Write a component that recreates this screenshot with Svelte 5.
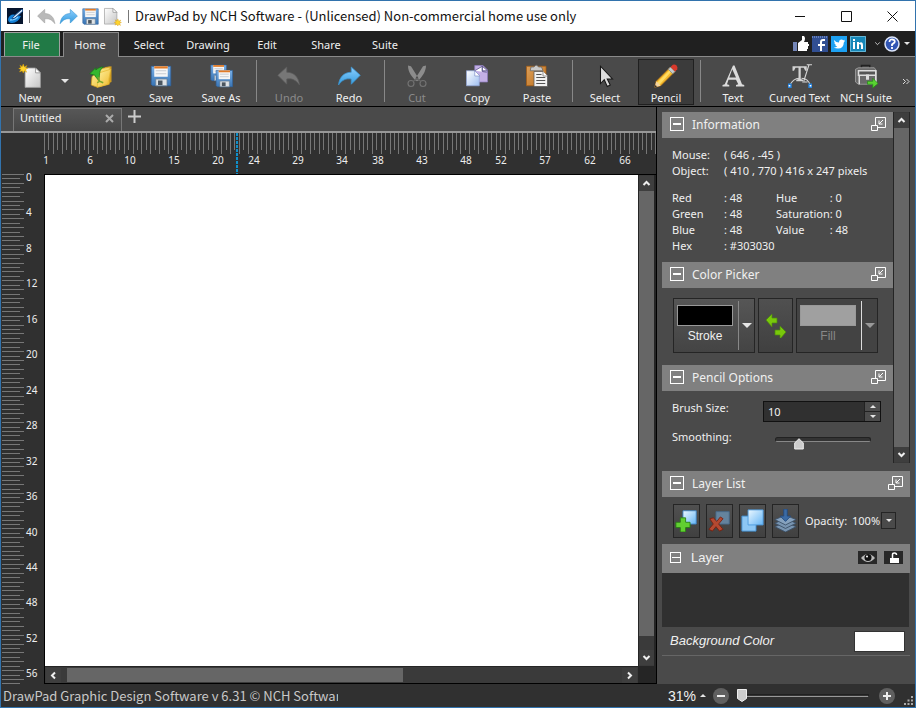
<script lang="ts">
	const tabs = ['File', 'Home', 'Select', 'Drawing', 'Edit', 'Share', 'Suite']
	let activeTab = $state('Home')

	type Tool = { name: string, icon: string, disabled?: boolean, menu?: boolean }

	const groups: Tool[][] = [
		[
			{ name: 'New', icon: 'new', menu: true },
			{ name: 'Open', icon: 'open' },
			{ name: 'Save', icon: 'save' },
			{ name: 'Save As', icon: 'saveas' },
		],
		[
			{ name: 'Undo', icon: 'undo', disabled: true },
			{ name: 'Redo', icon: 'redo' },
		],
		[
			{ name: 'Cut', icon: 'cut', disabled: true },
			{ name: 'Copy', icon: 'copy' },
			{ name: 'Paste', icon: 'paste' },
		],
		[
			{ name: 'Select', icon: 'select' },
			{ name: 'Pencil', icon: 'pencil' },
		],
		[
			{ name: 'Text', icon: 'text' },
			{ name: 'Curved Text', icon: 'curved' },
			{ name: 'NCH Suite', icon: 'suite' },
		],
	]
	let activeTool = $state('Pencil')

	// Rulers: one tick is half a unit of the label scale
	const tickStep = 4.43
	const ticks = Array.from({ length: 400 }, (_, i) => ({ at: Math.round(i * tickStep), long: i % 2 === 0 }))
	const topLabels = [[1, 0], [6, 10], [10, 19], [15, 29], [20, 39], [24, 47], [29, 57], [34, 67], [38, 75], [43, 85], [48, 95], [52, 103], [57, 113], [62, 123], [66, 131]]
	const leftLabels = Array.from({ length: 15 }, (_, i) => i * 4)
	const mouseTick = 193

	const colors = [
		['Red', '48', 'Hue', '0'],
		['Green', '48', 'Saturation', '0'],
		['Blue', '48', 'Value', '48'],
		['Hex', '#303030', '', ''],
	]

	let brushSize = $state('10')
	let smoothing = $state(20)
	let zoom = $state(0)
</script>

{#snippet page()}
	<path d="M5 4h13l6 6v18H5z" fill="url(#paper)" stroke="#999" />
	<path d="M18 4v6h6z" fill="#fff" stroke="#888" />
{/snippet}

{#snippet floppy()}
	<path d="M3 3h26v26H5l-2-2z" fill="url(#disk)" stroke="#2f639f" />
	<path d="M7 3h18v14H7z" fill="#f7f7f7" />
	<path d="M7 3h18v3H7z" fill="#e07b28" />
	<path d="M9 9h14M9 13h14" stroke="#c7cbd2" stroke-width="1.5" />
	<path d="M9 20h15v9H9z" fill="#dfe3e6" stroke="#6a7f93" />
	<path d="M12 22h6v6h-6z" fill="#4b5660" />
{/snippet}

{#snippet star(x, y)}
	<path transform="translate({x} {y})" d="M0-6L1.5-2 5-4 3-.8 6 0 3 1.4 4.5 5 1.2 3 0 6-1.4 3-5 4.5-3 1.2-6 0-3-1.2-4.5-4.5-1.5-2.5z" fill="#ffd42a" stroke="#d69a00" stroke-width=".6" />
{/snippet}

{#snippet icon(name)}
	<svg class="icon" viewBox="0 0 32 32" aria-hidden="true">
		{#if name === 'new'}
			<g transform="translate(4 1) scale(1.08)">{@render page()}</g>
			{@render star(7, 6)}
		{:else if name === 'newSmall'}
			<g transform="translate(-3 -2) scale(1.1)">{@render page()}</g>
			{@render star(25, 26)}
		{:else if name === 'open'}
			<path d="M12 8l8-1 2-3 8-1v21l-16 7z" fill="#cf9c20" />
			<path d="M4 17l3-3 4 1V7l17-3-1 23-16 4-8-3z" fill="url(#folder)" stroke="#d3a020" />
			<path d="M13 12l16-5-4 20-14 4z" fill="url(#folder)" stroke="#e7bb35" />
			<path d="M1 13L9 5v3c6-5 10-4 10-4-4 3-5 6-5 11l-1 7-5-6v-1z" fill="#35b72f" stroke="#187818" />
			<path d="M12 17l2 6 5 2M14 23l-3 2" fill="none" stroke="#76a82b" stroke-width="2" />
		{:else if name === 'save'}
			{@render floppy()}
		{:else if name === 'saveas'}
			<g transform="translate(0 -1) scale(.8)">{@render floppy()}</g>
			<g transform="translate(7 6) scale(.84)">{@render floppy()}</g>
		{:else if name === 'undo'}
			<path d="M13 4v7c10 0 16 7 17 17-5-7-10-9-17-8v7L1 15z" fill="#8b8b8b" stroke="#666" />
		{:else if name === 'redo'}
			<path d="M19 4v7C9 11 3 18 2 28c5-7 10-9 17-8v7l12-12z" fill="url(#arrow)" stroke="#3a94d1" />
		{:else if name === 'cut'}
			<path d="M4 2l4 1 10 16-3 4C9 17 4 11 4 2zM28 2l-4 1-10 16 3 4C23 17 28 10 28 2z" fill="#a8a8a8" />
			<circle cx="8" cy="26" r="4" fill="none" stroke="#858585" stroke-width="1.5" />
			<circle cx="24" cy="26" r="4" fill="none" stroke="#858585" stroke-width="1.5" />
			<path d="M11 23l6-4M21 23l-6-4" stroke="#707070" stroke-width="2" />
		{:else if name === 'copy'}
			<path d="M13 2h11l6 6v16H13z" fill="#c3afe5" stroke="#8d7cbb" />
			<path d="M2 9h10l7 6v14H2z" fill="url(#sheet)" stroke="#93a6d6" />
			<path d="M13 9l10-6v7l6 1M23 3l7 6h-7z" fill="#fff" stroke="#514b83" />
			<path d="M13 9v7h7z" fill="#fff" stroke="#8797cb" />
		{:else if name === 'paste'}
			<path d="M2 3h26v26H2z" fill="url(#board)" stroke="#a75c12" />
			<path d="M8 4h4q3-5 6 0h4l2 5H7z" fill="#cacaca" stroke="#666" />
			<path d="M12 10h12l6 6v14H12z" fill="#f1f1f1" stroke="#555" />
			<path d="M24 10v6h6" fill="#fff" stroke="#777" />
			<path d="M15 14h7M15 18h12M15 22h12M15 26h12" stroke="#555" stroke-width="1.5" />
		{:else if name === 'select'}
			<path d="M10 3v23l5-5 4 9 4-2-4-8h7z" fill="#ddd" stroke="#161616" stroke-width="1.4" />
		{:else if name === 'pencil'}
			<path d="M3 23L22 4l6 6L9 29l-8 2z" fill="#f4b82c" stroke="#a46819" />
			<path d="M4 25L23 6l2 2L7 28z" fill="#ffdc62" />
			<path d="M1 31l2-8 6 6z" fill="#f3d3a0" />
			<path d="M1 31l1-3 2 2z" fill="#222" />
			<path d="M19 7l6 6 3-3-6-6z" fill="#c5c9cc" stroke="#7c858a" />
			<path d="M22 4l3-3q3-1 5 1t1 5l-3 3z" fill="#d8392c" />
		{:else if name === 'text'}
			<path d="M2 30h9v-2l-3-1 2-6h10l3 6-3 1v2h11v-2l-3-1L18 2h-2L5 27l-3 1v2zM11 18l4-11 5 11z" fill="#dcdcdc" />
		{:else if name === 'curved'}
			<path d="M6 3h19v6h-2l-2-4h-4v15l3 1v2H11v-2l3-1V5h-4L8 9H6z" fill="#d3d3d3" />
			<path d="M28 1l-7 22M25 1h7M19 24h7M2 29Q7 19 15 19M18 19q9 0 12 10" fill="none" stroke="#d7d7d7" stroke-width="1.4" />
			<path d="M0 27h4v4H0zM28 27h4v4h-4z" fill="#fff" stroke="#2583df" stroke-width="1.8" />
		{:else if name === 'suite'}
			<path d="M10 6V2h11v4" fill="none" stroke="#222" stroke-width="2" />
			<path d="M2 7l4-2h21l3 4v18H6l-4-3z" fill="#6a6a6a" stroke="#aaa" />
			<path d="M6 9h23v6H6zM7 15v12M29 15v12" fill="#555" stroke="#ddd" stroke-width="2" />
			<path d="M16 14h4v7h-4z" fill="#ddd" />
			<path d="M18 23h7v-4l7 7-7 6v-5h-7z" fill="#59d332" stroke="#278818" />
		{/if}
	</svg>
{/snippet}

{#snippet caret(dir)}
	<svg class="caret {dir}" viewBox="0 0 9 9" aria-hidden="true"><path d="M1.5 6L4.5 3 7.5 6" /></svg>
{/snippet}

{#snippet header(title)}
	<header class="section-head">
		<button class="collapse" aria-label="Collapse {title}"></button>
		<h2>{title}</h2>
		<button class="dock" aria-label="Undock {title}">
			<svg viewBox="0 0 15 15"><path d="M4.5 8V.5h10v10H7M.5 8.5h6v5h-6zM12 3L8 7M8 3.5V7h3.5" /></svg>
		</button>
	</header>
{/snippet}

<div class="window">
	<svg class="defs" width="0" height="0" aria-hidden="true">
		<defs>
			<linearGradient id="paper" x2="1" y2="1"><stop stop-color="#fff" /><stop offset="1" stop-color="#c5c5c5" /></linearGradient>
			<linearGradient id="disk" x2="0" y2="1"><stop stop-color="#79afe6" /><stop offset="1" stop-color="#3975b5" /></linearGradient>
			<linearGradient id="folder" x2="1" y2="1"><stop stop-color="#fff2a0" /><stop offset="1" stop-color="#eeb92d" /></linearGradient>
			<linearGradient id="arrow" x2="0" y2="1"><stop stop-color="#8bceff" /><stop offset="1" stop-color="#349bdd" /></linearGradient>
			<linearGradient id="sheet" x2="1" y2="1"><stop stop-color="#fff" /><stop offset="1" stop-color="#9fbff0" /></linearGradient>
			<linearGradient id="board" x2="1" y2="1"><stop stop-color="#dda05a" /><stop offset="1" stop-color="#bb6e1c" /></linearGradient>
			<linearGradient id="blue" x2="1" y2="1"><stop stop-color="#ecf8ff" /><stop offset="1" stop-color="#65b5f5" /></linearGradient>
		</defs>
	</svg>

	<div class="titlebar">
		<svg class="logo" viewBox="0 0 16 16" aria-hidden="true">
			<path d="M0 0h16v16H0z" fill="#06152d" />
			<path d="M1 11q2-6 8-4l5 1q-3 7-9 7-4 0-4-4z" fill="#1482d8" />
			<path d="M3 12q5 0 8-3" fill="none" stroke="#77caff" stroke-width="1.5" />
			<path d="M15 1L6 9l-1 2 3-1 8-7z" fill="#dceeff" stroke="#164b8a" />
		</svg>
		<span class="bar"></span>
		<button class="quick dim" aria-label="Undo">{@render icon('undo')}</button>
		<button class="quick" aria-label="Redo">{@render icon('redo')}</button>
		<button class="quick" aria-label="Save">{@render icon('save')}</button>
		<button class="quick" aria-label="New">{@render icon('newSmall')}</button>
		<span class="bar second"></span>
		<h1>DrawPad by NCH Software - (Unlicensed) Non-commercial home use only</h1>
		<button class="control" aria-label="Minimize"><svg viewBox="0 0 11 11"><path d="M0 5.5h10" /></svg></button>
		<button class="control" aria-label="Maximize"><svg viewBox="0 0 11 11"><path d="M.5.5h10v10H.5z" /></svg></button>
		<button class="control" aria-label="Close"><svg viewBox="0 0 11 11"><path d="M.5.5l10 10M10.5.5l-10 10" /></svg></button>
	</div>

	<nav class="tabs">
		{#each tabs as tab}
			<button class:file={tab === 'File'} class:active={tab === activeTab} onclick={() => activeTab = tab}>{tab}</button>
		{/each}
		<div class="social">
			<button aria-label="Like"><svg viewBox="0 0 16 16"><path d="M0 6h4v9H0z" fill="#7486b8" /><path d="M5 7l4-3V0h2q2 2 0 6h4v2h1v2h-1v3h-1v2H5z" fill="#fff" /></svg></button>
			<button aria-label="Facebook"><svg viewBox="0 0 16 16"><path d="M0 0h16v16H0z" fill="#314f93" /><path d="M0 1h16" stroke="#9db1df" stroke-dasharray="1 1" /><path d="M13 4h-2q-2 0-2 2v9M6 9h7" fill="none" stroke="#fff" stroke-width="2" /></svg></button>
			<button aria-label="Twitter"><svg viewBox="0 0 16 16"><path d="M0 0h16v16H0z" fill="#1da1f2" /><path d="M3 4q2 2.500 5 2.500Q8 3.500 10.500 3.500q1 0 1.800.8L14 3.800l-1 1.500 1-.2-1.200 1.400Q12.700 12.500 7 12.500q-2.500 0-4.200-1 2 0 3.500-1Q4.500 10 4 8.800h1Q3.200 8 3.200 6.500l1 .2Q2.700 5.500 3 4z" fill="#fff" /></svg></button>
			<button aria-label="LinkedIn"><svg viewBox="0 0 16 16"><path d="M0 0h16v16H0z" fill="#1687b8" /><path d="M.5.5h15v15H.5z" fill="none" stroke="#65b5d5" /><path d="M3 6h2v7H3zM3 3h2v2H3zM7 6h2v1q4-2 4 2v4h-2V9q-2-2-2 0v4H7z" fill="#fff" /></svg></button>
			<button class="more" aria-label="More">{@render caret('down')}</button>
			<button aria-label="Help"><svg viewBox="0 0 16 16"><circle cx="8" cy="8" r="7" fill="#3156b4" stroke="#dce5fa" stroke-width="1.5" /><path d="M5.5 6q0-3 3-2.5 3 .5 2 3L8 8.500v1.500M8 11v2" fill="none" stroke="#fff" stroke-width="1.800" /></svg></button>
			<button class="help-menu" aria-label="Help menu"><i class="triangle"></i></button>
		</div>
	</nav>

	<div class="ribbon">
		{#each groups as group}
			<div class="group">
				{#each group as tool}
					<button
						class="tool {tool.icon}"
						class:active={tool.name === activeTool}
						disabled={tool.disabled}
						onclick={() => activeTool = tool.name}
					>
						{@render icon(tool.icon)}
						<span>{tool.name}</span>
					</button>
					{#if tool.menu}
						<button class="tool-menu" aria-label="{tool.name} menu"><i class="triangle"></i></button>
					{/if}
				{/each}
			</div>
		{/each}
		<button class="overflow" aria-label="More tools"><svg viewBox="0 0 8 7"><path d="M1 1l2.500 2.500L1 6M4.500 1L7 3.500 4.500 6" /></svg></button>
	</div>

	<main>
		<section class="document">
			<div class="doc-tabs">
				<div class="doc-tab">
					<span>Untitled</span>
					<button aria-label="Close tab"><svg viewBox="0 0 9 9"><path d="M1 1l7 7M8 1L1 8" /></svg></button>
				</div>
				<button class="add" aria-label="New tab"><svg viewBox="0 0 13 13"><path d="M6.500 0v13M0 6.500h13" /></svg></button>
			</div>
			<div class="workspace">
				<svg class="ruler top">
					{#each ticks as tick}
						<path d="M{tick.at + 43}.5 0v{tick.long ? 21 : 17}" />
					{/each}
					{#each topLabels as [label, n]}
						<text x={45 + Math.round(n * 4.42)} y="31">{label}</text>
					{/each}
					<path class="mouse" d="M{mouseTick + 43} 0v41" />
				</svg>
				<svg class="ruler left">
					<!-- the ruler reaches 4px above the view, so the first label fits -->
					<g transform="translate(0 4)">
						{#each ticks as tick}
							<path d="M1 {tick.at}.5h{tick.long ? 22 : 18}" />
						{/each}
						{#each leftLabels as label, i}
							<text class="start" x="25" y={7 + Math.round(i * 35.45)}>{label}</text>
						{/each}
					</g>
				</svg>
				<div class="view">
					<div class="canvas"></div>
					<div class="scroll vertical">
						<button aria-label="Scroll up">{@render caret('up')}</button>
						<div class="track"><div class="thumb" style="flex-grow: 97"></div><div style="flex-grow: 3"></div></div>
						<button aria-label="Scroll down">{@render caret('down')}</button>
					</div>
					<div class="scroll horizontal">
						<button aria-label="Scroll left">{@render caret('left')}</button>
						<div class="track"><div style="flex-grow: 1"></div><div class="thumb" style="flex-grow: 60"></div><div style="flex-grow: 39"></div></div>
						<button aria-label="Scroll right">{@render caret('right')}</button>
					</div>
				</div>
			</div>
		</section>

		<aside>
			<div class="upper">
				<div class="sections">
					{@render header('Information')}
					<div class="info">
						<dl>
							<dt>Mouse:</dt><dd>( 646 , -45 )</dd>
							<dt>Object:</dt><dd>( 410 , 770 ) 416 x 247 pixels</dd>
						</dl>
						<table>
							<tbody>
								{#each colors as [a, av, b, bv]}
									<tr><th>{a}</th><td>: {av}</td><th>{b}</th><td>{#if b}: {bv}{/if}</td></tr>
								{/each}
							</tbody>
						</table>
					</div>

					{@render header('Color Picker')}
					<div class="picker">
						<div class="swatch">
							<button class="pick"><i class="color black"></i>Stroke</button>
							<button class="drop" aria-label="Stroke menu"><i class="triangle"></i></button>
						</div>
						<button class="swap" aria-label="Swap colors">
							<svg viewBox="0 0 20 24"><path d="M0 6l6-6v4h5v5H6v4zM20 18l-6-6v4H9v5h5v4z" fill="#79c80b" stroke="#4c8b0b" stroke-width=".7" /></svg>
						</button>
						<div class="swatch off">
							<button class="pick"><i class="color"></i>Fill</button>
							<button class="drop" aria-label="Fill menu"><i class="triangle"></i></button>
						</div>
					</div>

					{@render header('Pencil Options')}
					<div class="options">
						<label for="brush">Brush Size:</label>
						<div class="spinner">
							<input id="brush" type="text" bind:value={brushSize} />
							<div class="spin">
								<button aria-label="Increase"><i class="triangle up"></i></button>
								<button aria-label="Decrease"><i class="triangle"></i></button>
							</div>
						</div>
						<label for="smoothing">Smoothing:</label>
						<div class="slider">
							<input id="smoothing" type="range" min="0" max="100" bind:value={smoothing} />
							<span class="knob" style="left: {smoothing}%"><svg viewBox="0 0 10 12"><path d="M5 .7l4.300 4.300v6H.7V5z" /></svg></span>
						</div>
					</div>
				</div>
				<div class="scroll vertical">
					<button aria-label="Scroll panels up">{@render caret('up')}</button>
					<div class="track"><div class="thumb" style="flex-grow: 1"></div></div>
					<button aria-label="Scroll panels down">{@render caret('down')}</button>
				</div>
			</div>

			{@render header('Layer List')}
			<div class="layer-tools">
				<button aria-label="Add layer"><svg viewBox="0 0 26 26"><path d="M9 2h15v15H9z" fill="url(#blue)" stroke="#3d84c5" /><path d="M6 10h6v5h5v6h-5v5H6v-5H1v-6h5z" fill="#61cf31" stroke="#287e14" /></svg></button>
				<button aria-label="Delete layer"><svg viewBox="0 0 26 26"><path d="M9 3h15v14H9z" fill="#65839d" stroke="#46698a" /><path d="M2 11l4-1 4 4 4-5 3 2-5 6 5 6-4 2-4-5-4 5-4-2 5-6z" fill="#b44931" stroke="#79200f" /></svg></button>
				<button aria-label="Duplicate layer"><svg viewBox="0 0 26 26"><path d="M1 8h16v17H1z" fill="#8dc7f4" stroke="#3f8ed0" /><path d="M8 1h17v17H8z" fill="url(#blue)" stroke="#4b99dd" /></svg></button>
				<button aria-label="Merge layers"><svg viewBox="0 0 26 26"><path d="M1 20l12-5 12 5-12 6z" fill="#7894b0" stroke="#3c5067" /><path d="M1 16l12-5 12 5-12 6z" fill="#7894b0" stroke="#3c5067" /><path d="M1 12l12-5 12 5-12 6z" fill="#86a2be" stroke="#3c5067" /><path d="M11 0h4v8h4l-6 6-6-6h4z" fill="#3b6ba5" stroke="#244a7b" /></svg></button>
				<label for="opacity">Opacity:</label>
				<div class="opacity">
					<select id="opacity"><option>100%</option><option>50%</option></select>
					<span><i class="triangle"></i></span>
				</div>
			</div>

			<div class="layer">
				<button class="collapse small" aria-label="Collapse layer"></button>
				<h3>Layer</h3>
				<button class="state" aria-label="Visibility"><svg viewBox="0 0 18 12"><path d="M2 6q7-8 14 0-7 8-14 0z" fill="#bbb" /><circle cx="9" cy="5.500" r="3.500" fill="#111" /><circle cx="8" cy="4.500" r="1" fill="#fff" /></svg></button>
				<button class="state" aria-label="Lock"><svg viewBox="0 0 18 12"><path d="M5 6h9v5H5z" fill="#fff" /><path d="M7.500 7V2.500q0-1.500 2-1.500 2 0 2 2" fill="none" stroke="#fff" stroke-width="1.500" /></svg></button>
			</div>
			<div class="layer-body"></div>
			<div class="background">
				<span>Background Color</span>
				<button aria-label="Background Color"></button>
			</div>
		</aside>
	</main>

	<footer>
		<p>DrawPad Graphic Design Software v 6.31 © NCH Software</p>
		<button class="percent">31% <i class="triangle up"></i></button>
		<button class="round" aria-label="Zoom out"><svg viewBox="0 0 16 16"><circle cx="8" cy="8" r="8" /><path d="M4 8h8" /></svg></button>
		<div class="slider zoom">
			<input type="range" aria-label="Zoom" min="0" max="100" bind:value={zoom} />
			<span class="knob" style="left: {zoom}%"><svg viewBox="0 0 10 13"><path d="M.5.5h9v9L5 12.500.5 9.500z" /></svg></span>
		</div>
		<button class="round" aria-label="Zoom in"><svg viewBox="0 0 16 16"><circle cx="8" cy="8" r="8" /><path d="M4 8h8M8 4v8" /></svg></button>
		<svg class="grip" viewBox="0 0 9 9" aria-hidden="true"><path d="M7 0h2v2H7zM7 3.500h2v2H7zM3.500 3.500h2v2h-2zM7 7h2v2H7zM3.500 7h2v2h-2zM0 7h2v2H0z" /></svg>
	</footer>
</div>

<style>
	:global(body) {
		margin: 0;
	}
	.window {
		--ui: "Noto Sans", "Open Sans", sans-serif;
		--system: "Noto Sans CJK SC", "Noto Sans", sans-serif;
		--edge: #252525;

		box-sizing: border-box;
		min-height: 100vh;
		display: flex;
		flex-direction: column;
		overflow: hidden;
		border: 1px solid #3273ad;
		background: #4a4a4a;
		color: #f0f0f0;
		font: 11px/16px var(--ui);
	}
	.window * {
		box-sizing: border-box;
	}
	.defs {
		position: absolute;
	}
	button {
		display: flex;
		align-items: center;
		justify-content: center;
		margin: 0;
		padding: 0;
		border: 0;
		background: none;
		color: inherit;
		font: inherit;
	}
	h1, h2, h3, p, dl, dd {
		margin: 0;
		font-weight: normal;
	}
	svg {
		display: block;
	}
	.triangle {
		border: 4px solid transparent;
		border-top-color: #e5e5e5;
		border-bottom: 0;
	}
	.triangle.up {
		border: 3px solid transparent;
		border-bottom-color: #e5e5e5;
		border-top: 0;
	}
	.caret {
		width: 9px;
		height: 9px;
		fill: none;
		stroke: #eee;
		stroke-width: 2;
	}
	.caret.down { transform: rotate(180deg); }
	.caret.left { transform: rotate(-90deg); }
	.caret.right { transform: rotate(90deg); }

	/* Title bar */
	.titlebar {
		display: flex;
		align-items: center;
		height: 30px;
		padding-left: 6px;
		background: #fff;
		color: #111;
	}
	.logo {
		width: 16px;
		height: 16px;
	}
	.bar {
		width: 1px;
		height: 13px;
		margin: 0 5px 0 6px;
		background: #777;
	}
	.bar.second {
		margin: 0 6px 0 5px;
	}
	.quick {
		width: 22px;
		height: 20px;
	}
	.quick .icon {
		width: 19px;
		height: 19px;
	}
	.quick.dim {
		opacity: .6;
	}
	h1 {
		flex: 1;
		font: 13px/20px var(--system);
		white-space: nowrap;
	}
	.control {
		width: 46px;
		height: 30px;
	}
	.control svg {
		width: 11px;
		height: 11px;
		fill: none;
		stroke: #111;
	}

	/* Tabs */
	.tabs {
		display: flex;
		align-items: flex-end;
		gap: 3px;
		height: 26px;
		padding-left: 3px;
		border-bottom: 1px solid #8a8a8a;
		background: #202020;
	}
	.tabs > button {
		width: 56px;
		height: 24px;
		padding: 2px 2px 0 0;
	}
	.tabs > .file {
		padding-top: 0;
		border: 1px solid #a0a0a0;
		border-bottom: 0;
		background: #217a46;
	}
	.tabs > .active {
		height: 25px;
		margin-bottom: -1px;
		padding-top: 0;
		border: 1px solid #8a8a8a;
		border-bottom: 0;
		background: #4a4a4a;
	}
	.social {
		display: flex;
		align-items: center;
		gap: 3px;
		height: 25px;
		margin-left: auto;
		padding-right: 5px;
	}
	.social button {
		width: 16px;
		height: 16px;
	}
	.social svg {
		width: 16px;
		height: 16px;
	}
	.social .more {
		width: 12px;
	}
	.social .caret {
		width: 7px;
		height: 7px;
		margin-left: 4px;
		stroke-width: 1;
	}
	.social .help-menu {
		width: 7px;
	}
	.help-menu .triangle {
		border-width: 3px 3px 0;
	}

	/* Ribbon */
	.ribbon {
		display: flex;
		height: 50px;
		border-bottom: 1px solid #000;
		background: #4a4a4a;
	}
	.group {
		display: flex;
		align-items: flex-end;
		padding-bottom: 1px;
	}
	.group + .group::before {
		content: '';
		align-self: center;
		width: 1px;
		height: 42px;
		margin: 0 2px 0 5px;
		background: #888;
	}
	.tool {
		flex-direction: column;
		justify-content: flex-end;
		gap: 3px;
		width: 60px;
		height: 46px;
		line-height: 14px;
		white-space: nowrap;
	}
	.tool.new {
		width: 58px;
	}
	.tool.curved {
		width: 73px;
	}
	.tool .icon {
		width: 24px;
		height: 24px;
	}
	.tool:disabled {
		color: #8a8a8a;
	}
	.tool:disabled .icon {
		opacity: .7;
	}
	.tool.active {
		width: 56px;
		margin: 0 1px 0 3px;
		background: #3b3b3b;
		box-shadow: inset 0 0 0 1px #202020;
	}
	.tool-menu {
		align-self: center;
		width: 12px;
	}
	.overflow {
		margin-left: auto;
		width: 18px;
	}
	.overflow svg {
		width: 8px;
		height: 7px;
		fill: none;
		stroke: #ddd;
	}

	/* Document */
	main {
		display: flex;
		flex: 1;
	}
	.document {
		flex: 1;
		display: flex;
		flex-direction: column;
		min-width: 0;
		border-right: 1px solid #000;
	}
	.doc-tabs {
		display: flex;
		align-items: flex-end;
		height: 26px;
		padding-left: 12px;
		border-bottom: 2px solid #989898;
	}
	.doc-tab {
		display: flex;
		align-items: center;
		justify-content: space-between;
		width: 109px;
		height: 23px;
		padding: 0 7px 4px 6px;
		border: 1px solid #777;
		border-bottom: 0;
		background: linear-gradient(#575757, #474747);
	}
	.doc-tab svg {
		width: 9px;
		height: 9px;
		stroke: #aaa;
		stroke-width: 2;
	}
	.add {
		width: 25px;
		height: 24px;
		padding-bottom: 5px;
	}
	.add svg {
		width: 13px;
		height: 13px;
		stroke: #ccc;
		stroke-width: 2;
	}
	.workspace {
		flex: 1;
		display: grid;
		grid-template: 41px 1fr / 43px 1fr;
		background: #303030;
	}
	.ruler {
		width: 100%;
		height: 100%;
		overflow: hidden;
		stroke: #777;
		shape-rendering: crispEdges;
	}
	.ruler.top {
		grid-column: 1 / 3;
	}
	.ruler.left {
		/* the view decides the height */
		height: 0;
		min-height: calc(100% + 4px);
		margin-top: -4px;
	}
	.ruler text {
		fill: #eee;
		stroke: none;
		font-size: 10px;
		text-anchor: middle;
	}
	.ruler .start {
		text-anchor: start;
	}
	.ruler .mouse {
		stroke: #0f8fc9;
		stroke-width: 2;
		stroke-dasharray: 3 1;
	}
	.view {
		display: grid;
		grid-template: 1fr 17px / 1fr 18px;
		border: 1px solid #000;
		border-right: 0;
		background: var(--edge);
	}
	.canvas {
		background: #fff;
	}
	.scroll {
		display: flex;
		padding: 1px;
		background: #3a3a3a;
	}
	.scroll.vertical {
		flex: none;
		flex-direction: column;
		width: 17px;
		padding: 1px 0;
		border: 1px solid var(--edge);
		border-width: 0 1px;
	}
	.scroll.horizontal {
		border-top: 1px solid var(--edge);
	}
	.scroll button {
		flex: none;
		width: 15px;
		height: 15px;
		background: #3e3e3e;
	}
	.track {
		flex: 1;
		display: flex;
	}
	.vertical .track {
		flex-direction: column;
	}
	.thumb {
		background: #666;
	}

	/* Side panels */
	aside {
		flex: none;
		width: 258px;
		padding: 5px 5px 0 5px;
	}
	.upper {
		display: flex;
		margin-bottom: 8px;
	}
	.sections {
		flex: 1;
		min-width: 0;
	}
	.section-head {
		display: flex;
		align-items: center;
		height: 26px;
		padding: 0 7px 2px 8px;
		background: #808080;
	}
	h2 {
		flex: 1;
		padding: 1px 0 0 8px;
		font-size: 12px;
	}
	.collapse {
		width: 14px;
		height: 14px;
		border: 1px solid #fff;
	}
	.collapse::before {
		content: '';
		width: 8px;
		height: 2px;
		background: #fff;
	}
	.collapse.small {
		width: 11px;
		height: 11px;
	}
	.small::before {
		height: 1px;
	}
	.dock svg {
		width: 15px;
		height: 15px;
		fill: none;
		stroke: #fff;
	}
	.info {
		height: 124px;
		padding: 9px 10px;
	}
	dl {
		display: grid;
		grid-template-columns: 52px 1fr;
		margin-bottom: 11px;
		white-space: nowrap;
	}
	table {
		border-collapse: collapse;
	}
	th, td {
		height: 16px;
		padding: 0;
		font-weight: normal;
		text-align: left;
		white-space: nowrap;
	}
	th {
		width: 52px;
	}
	td {
		width: 52px;
		max-width: 52px;
	}
	.picker {
		display: flex;
		gap: 3px;
		height: 77px;
		padding: 10px 11px;
		font: 12px/16px "Liberation Sans", Arial, sans-serif;
	}
	.swatch {
		display: flex;
		width: 82px;
		height: 55px;
		border: 1px solid var(--edge);
		background: linear-gradient(#565656, #444);
	}
	.pick {
		flex: 1;
		flex-direction: column;
		gap: 2px;
		padding: 0 2px 2px 0;
	}
	.color {
		width: 56px;
		height: 21px;
		border: 1px solid #999;
		background: #a0a0a0;
	}
	.color.black {
		background: #000;
	}
	.drop {
		width: 16px;
		height: 49px;
		margin: 2px 0;
		border-left: 1px solid #888;
	}
	.drop .triangle {
		border-width: 5px 5px 0;
	}
	.swatch.off {
		background: #434343;
		color: #888;
	}
	.off .drop {
		border-color: #ddd;
	}
	.off .triangle {
		border-top-color: #999;
	}
	.swap {
		width: 35px;
		height: 55px;
		border: 1px solid var(--edge);
		background: linear-gradient(#505050, #404040);
	}
	.swap svg {
		width: 20px;
		height: 24px;
	}
	.options {
		display: grid;
		grid-template: 21px 21px / 91px minmax(0, 1fr);
		row-gap: 8px;
		align-items: center;
		padding: 10px 12px 12px 10px;
	}
	.options label {
		padding-bottom: 7px;
	}
	.spinner {
		display: flex;
		height: 21px;
		border: 1px solid #111;
	}
	.spinner input {
		flex: 1;
		min-width: 0;
		padding: 0 4px;
		border: 0;
		background: #303030;
		color: inherit;
		font: inherit;
	}
	.spin {
		display: grid;
		gap: 1px;
		width: 16px;
		padding-left: 1px;
		background: #222;
	}
	.spin button {
		background: #4c4c4c;
	}
	.spin .triangle {
		border-left-width: 3px;
		border-right-width: 3px;
		border-top-width: 3px;
	}
	.spin .up {
		border-top-width: 0;
	}
	.slider {
		position: relative;
		height: 12px;
		margin: 0 10px 0 12px;
	}
	.options .slider {
		align-self: end;
		margin-bottom: 2px;
	}
	.slider input {
		appearance: none;
		display: block;
		width: 100%;
		height: 5px;
		margin: 0;
		border: 1px solid #222;
		border-bottom-color: #888;
		border-radius: 3px;
		background: #333;
	}
	.slider input::-webkit-slider-thumb {
		appearance: none;
		width: 10px;
		height: 12px;
		opacity: 0;
	}
	.knob {
		position: absolute;
		top: 1px;
		width: 10px;
		pointer-events: none;
	}
	.knob svg {
		width: 10px;
		fill: #ccc;
		stroke: #eee;
	}
	.layer-tools {
		display: flex;
		align-items: center;
		height: 47px;
		padding: 0 14px 0 11px;
	}
	.layer-tools button {
		width: 27px;
		height: 34px;
		margin-right: 6px;
		border: 1px solid var(--edge);
		background: linear-gradient(#505050, #404040);
	}
	.layer-tools button svg {
		width: 23px;
		height: 23px;
	}
	.layer-tools label {
		flex: 1;
	}
	.opacity {
		position: relative;
	}
	select {
		appearance: none;
		display: block;
		width: 44px;
		height: 17px;
		padding: 0;
		border: 0;
		background: none;
		color: inherit;
		font: inherit;
	}
	.opacity span {
		position: absolute;
		top: 0;
		right: 0;
		display: grid;
		place-items: center;
		width: 15px;
		height: 17px;
		border: 1px solid var(--edge);
		background: #4a4a4a;
		pointer-events: none;
	}
	.opacity .triangle {
		border-width: 3px 3px 0;
	}
	.layer {
		display: flex;
		align-items: center;
		gap: 7px;
		height: 29px;
		padding: 0 7px 2px 8px;
		background: #808080;
	}
	h3 {
		flex: 1;
		padding: 1px 0 0 3px;
		font: 13px/16px "Liberation Sans", Arial, sans-serif;
	}
	.state {
		width: 19px;
		height: 13px;
		background: #282828;
	}
	.state svg {
		width: 18px;
		height: 12px;
	}
	.layer-body {
		height: 54px;
		margin-right: 1px;
		background: #303030;
	}
	.background {
		display: flex;
		align-items: center;
		justify-content: space-between;
		height: 29px;
		padding: 0 5px 0 8px;
		border-bottom: 1px solid #666;
		font: italic 13px/16px "Liberation Sans", Arial, sans-serif;
	}
	.background button {
		width: 51px;
		height: 21px;
		border: 1px solid #333;
		background: #fff;
	}

	/* Status bar */
	footer {
		display: flex;
		align-items: center;
		height: 23px;
		padding: 0 2px;
		background: #303030;
	}
	footer p {
		overflow: hidden;
		width: 335px;
		margin-right: auto;
		color: #c8c8c8;
		font: 13px/20px var(--system);
		white-space: nowrap;
	}
	.percent {
		gap: 4px;
		margin-right: 7px;
		font: 14px/16px "Liberation Sans", Arial, sans-serif;
	}
	.round svg {
		width: 16px;
		height: 16px;
		fill: #606060;
	}
	.round path {
		stroke: #eee;
		stroke-width: 2;
	}
	.slider.zoom {
		width: 132px;
		height: 13px;
		margin: 0 10px 0 8px;
	}
	.zoom .knob {
		top: 0;
	}
	.zoom input {
		height: 3px;
		margin-top: 5px;
		border-color: #202020;
		border-bottom-color: #999;
	}
	.grip {
		align-self: flex-end;
		width: 9px;
		height: 9px;
		margin: 0 0 2px 9px;
		fill: #aaa;
	}
</style>
